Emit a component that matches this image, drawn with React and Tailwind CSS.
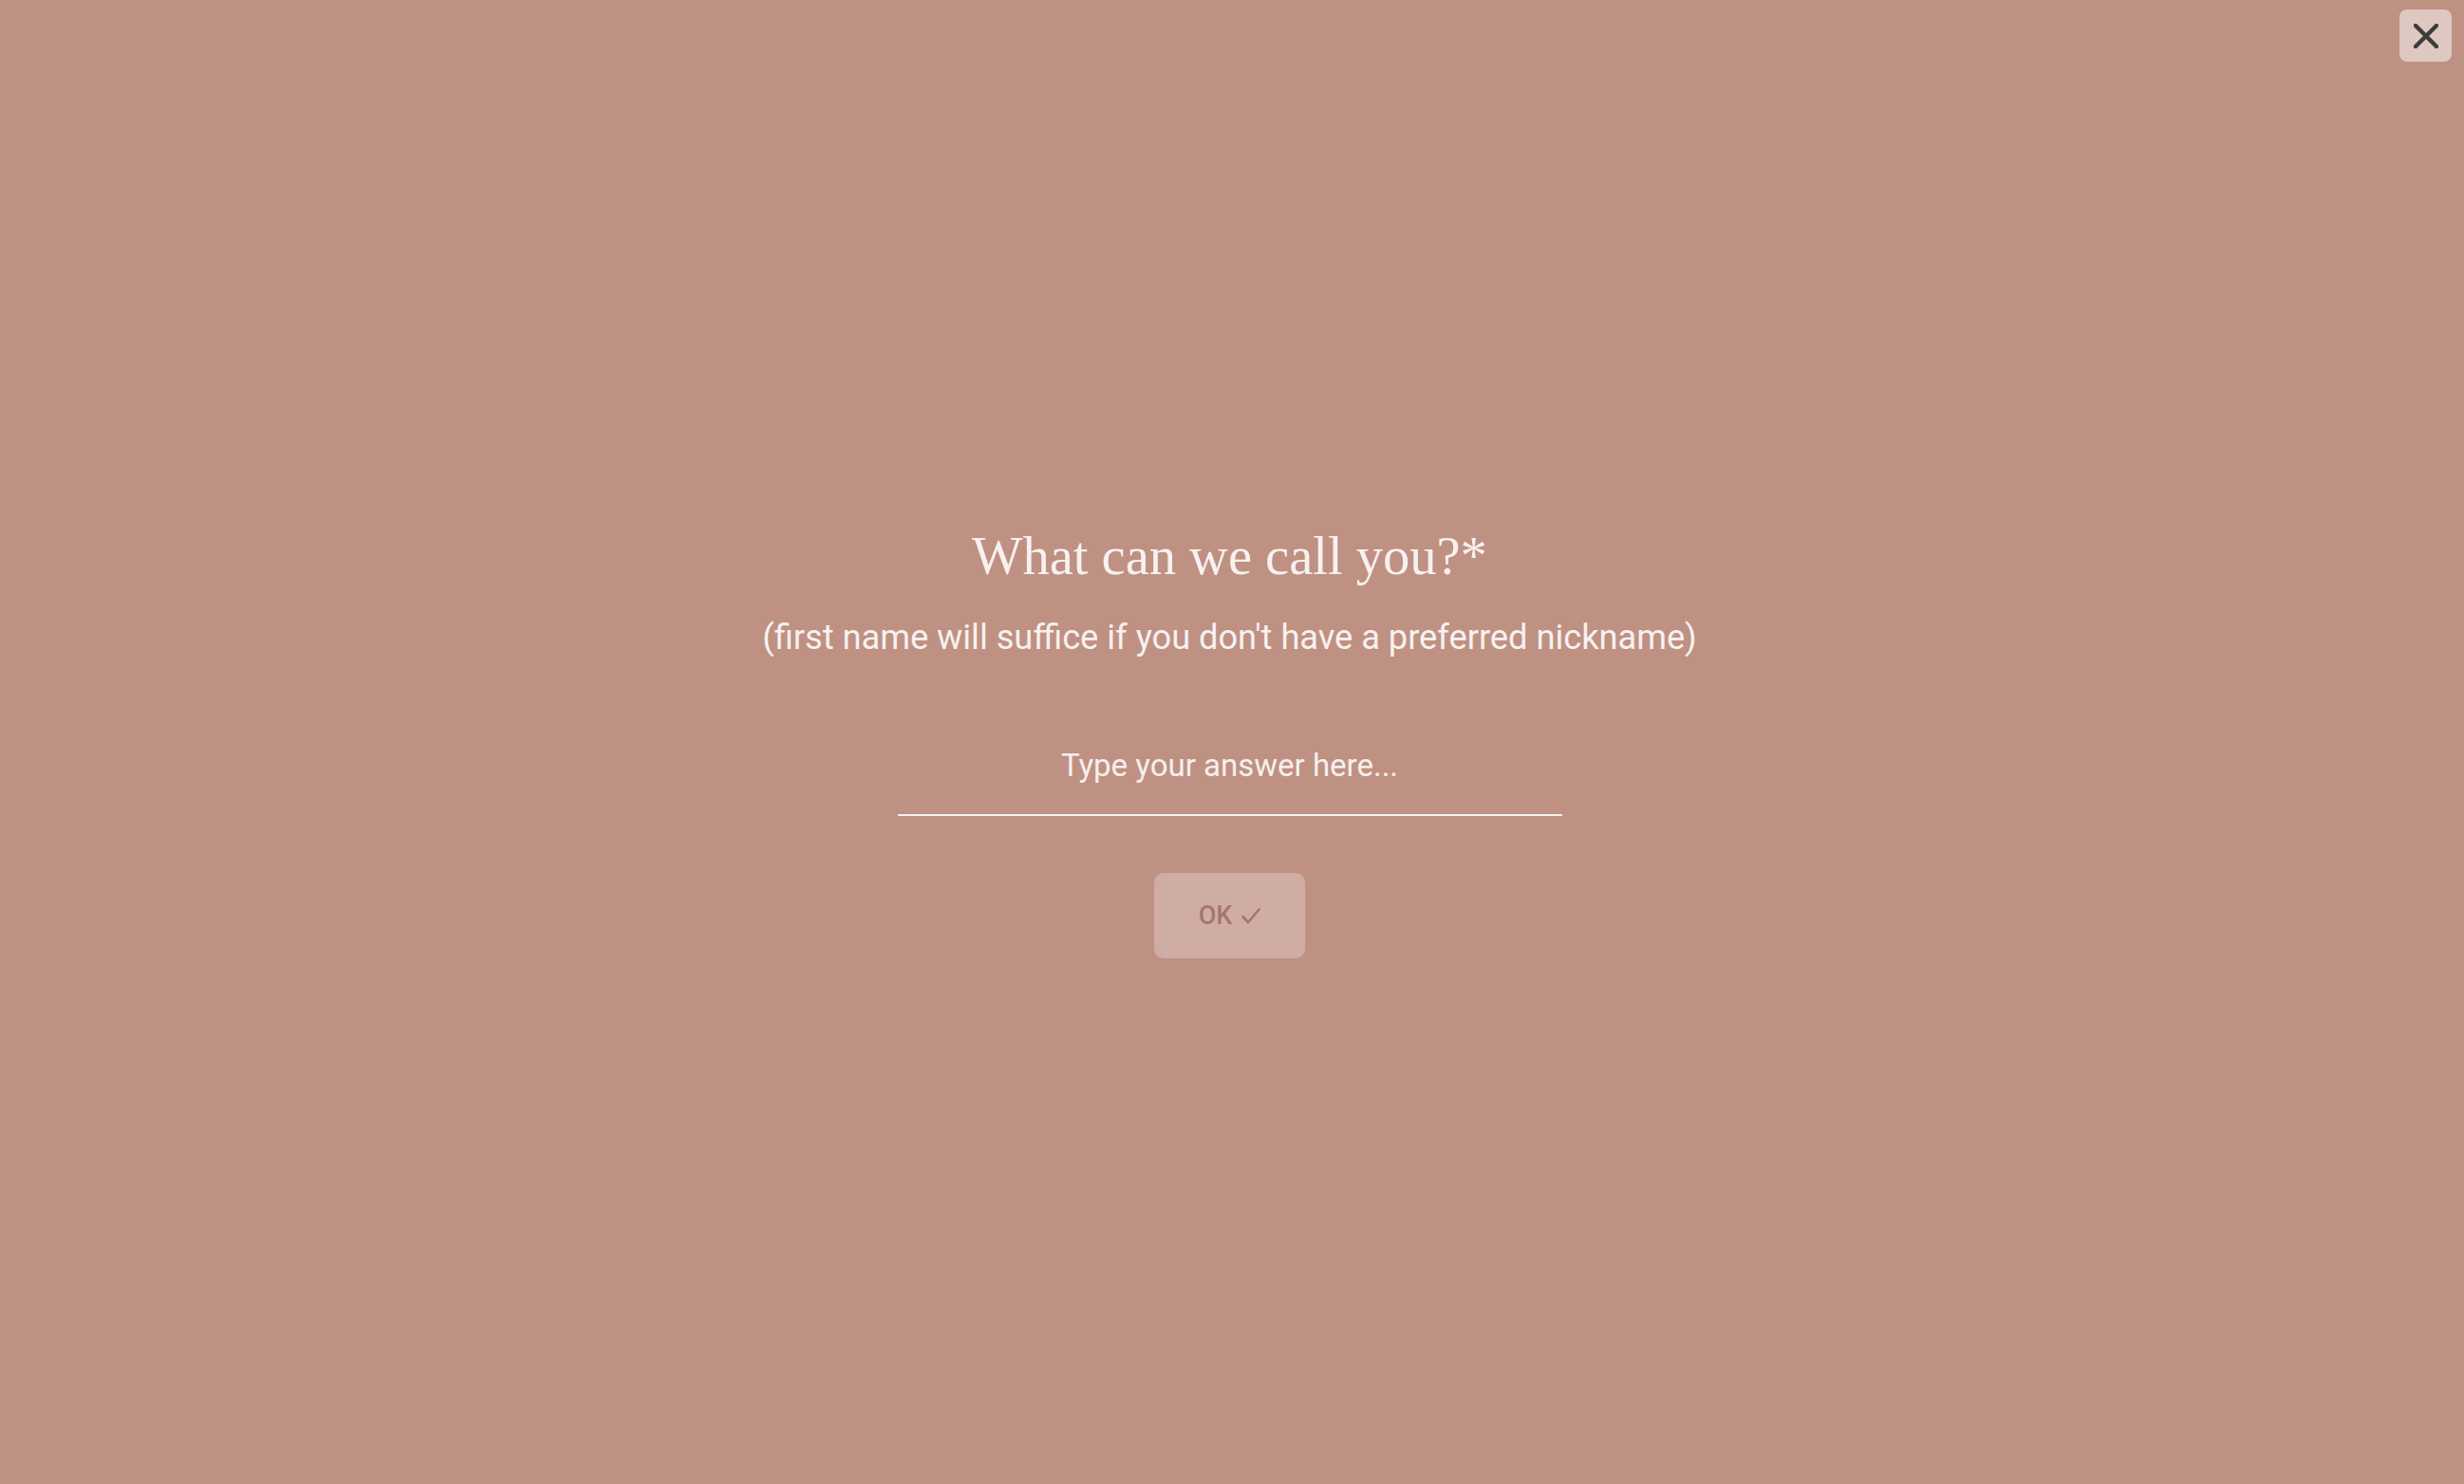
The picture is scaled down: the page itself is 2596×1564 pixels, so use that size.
export default function App() {
  return (
    <div className="relative w-full h-[1564px] bg-[#bf9183] overflow-hidden" style={{ fontFamily: "Roboto, 'Liberation Sans', sans-serif" }}>
      <button className="absolute top-[10px] right-[13px] w-[55px] h-[55px] rounded-[8px] bg-[#dfc8c2] flex items-center justify-center">
        <svg width="26" height="26" viewBox="0 0 26 26" fill="none">
          <path d="M2 2 L24 24 M24 2 L2 24" stroke="#3d3d3d" strokeWidth="4.5" strokeLinecap="round" />
        </svg>
      </button>
      <div className="flex flex-col items-center pt-[550px] pr-[5px]">
        <h1 className="text-[56.5px] leading-[72px] text-[#f7f1ef] font-normal" style={{ fontFamily: "'Liberation Serif', 'DejaVu Serif', serif" }}>
          What can we call you?*
        </h1>
        <p className="mt-[26px] text-[36.2px] leading-[48px] text-[#f7f1ef]">
          (first name will suffice if you don't have a preferred nickname)
        </p>
        <input
          type="text"
          placeholder="Type your answer here..."
          className="mt-[80px] w-[700px] h-[84px] pt-0 pb-[22px] border-b-2 border-[#f7f1ef] bg-transparent text-center text-[33px] text-[#f7f1ef] placeholder:text-[#f5efed] outline-none"
        />
        <button className="mt-[60px] w-[159px] h-[90px] rounded-[10px] bg-[#cfada5] flex items-center justify-center gap-[10px] text-[27px] font-medium text-[#a6766b]">
          <span>OK</span>
          <svg width="20" height="17" viewBox="0 0 20 17" fill="none">
            <path d="M1.5 9 L7 15 L18.5 1.5" stroke="#a6766b" strokeWidth="2.6" strokeLinecap="round" strokeLinejoin="round" />
          </svg>
        </button>
      </div>
    </div>
  );
}
